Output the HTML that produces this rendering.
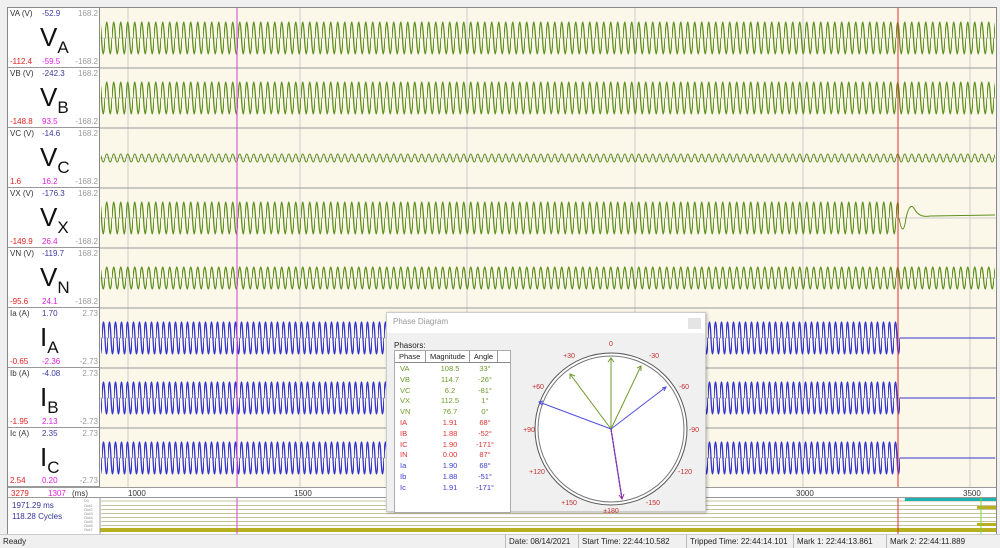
<!DOCTYPE html>
<html><head><meta charset="utf-8"><style>
*{margin:0;padding:0;box-sizing:border-box}
body{width:1000px;height:548px;background:#f0f0f0;position:relative;overflow:hidden;font-family:"Liberation Sans",sans-serif}
.a{position:absolute}
.lbl{position:absolute;left:8px;width:92px;background:#fff;border-bottom:1px solid #999;font-size:8px;color:#333}
.lbl .n{position:absolute;left:2px;top:1px}
.lbl .b{position:absolute;left:34px;top:1px;color:#3a3aa0}
.lbl .s{position:absolute;right:2px;top:1px;color:#999}
.lbl .s2{position:absolute;right:2px;bottom:1px;color:#999}
.lbl .r{position:absolute;left:2px;bottom:1px;color:#e02020}
.lbl .m{position:absolute;left:34px;bottom:1px;color:#e020e0}
.lbl .big{position:absolute;left:32px;top:14px;font-size:26px;color:#111}
.lbl .big sub{font-size:17px;vertical-align:-7px}
.st{position:absolute;top:535px;height:13px;font-size:8px;color:#222;border-left:1px solid #bbb;padding:2px 3px}
</style></head><body>
<div class="a" style="left:7px;top:7px;width:990px;height:527px;border:1px solid #888;background:#fff"></div>

<div class="lbl" style="top:8px;height:60px"><span class="n">VA (V)</span><span class="b">-52.9</span><span class="s">168.2</span><span class="big">V<sub>A</sub></span><span class="r">-112.4</span><span class="m">-59.5</span><span class="s2">-168.2</span></div>
<div class="lbl" style="top:68px;height:60px"><span class="n">VB (V)</span><span class="b">-242.3</span><span class="s">168.2</span><span class="big">V<sub>B</sub></span><span class="r">-148.8</span><span class="m">93.5</span><span class="s2">-168.2</span></div>
<div class="lbl" style="top:128px;height:60px"><span class="n">VC (V)</span><span class="b">-14.6</span><span class="s">168.2</span><span class="big">V<sub>C</sub></span><span class="r">1.6</span><span class="m">16.2</span><span class="s2">-168.2</span></div>
<div class="lbl" style="top:188px;height:60px"><span class="n">VX (V)</span><span class="b">-176.3</span><span class="s">168.2</span><span class="big">V<sub>X</sub></span><span class="r">-149.9</span><span class="m">26.4</span><span class="s2">-168.2</span></div>
<div class="lbl" style="top:248px;height:60px"><span class="n">VN (V)</span><span class="b">-119.7</span><span class="s">168.2</span><span class="big">V<sub>N</sub></span><span class="r">-95.6</span><span class="m">24.1</span><span class="s2">-168.2</span></div>
<div class="lbl" style="top:308px;height:60px"><span class="n">Ia (A)</span><span class="b">1.70</span><span class="s">2.73</span><span class="big">I<sub>A</sub></span><span class="r">-0.65</span><span class="m">-2.36</span><span class="s2">-2.73</span></div>
<div class="lbl" style="top:368px;height:60px"><span class="n">Ib (A)</span><span class="b">-4.08</span><span class="s">2.73</span><span class="big">I<sub>B</sub></span><span class="r">-1.95</span><span class="m">2.13</span><span class="s2">-2.73</span></div>
<div class="lbl" style="top:428px;height:59px"><span class="n">Ic (A)</span><span class="b">2.35</span><span class="s">2.73</span><span class="big">I<sub>C</sub></span><span class="r">2.54</span><span class="m">0.20</span><span class="s2">-2.73</span></div>

<svg class="a" style="left:99px;top:8px" width="897" height="480" viewBox="99 8 897 480">
<defs>
<pattern id="g1" patternUnits="userSpaceOnUse" width="7" height="60"><path d="M0,30 Q1.75,-2 3.5,30 T7,30" fill="none" stroke="#5f8f1e" stroke-width="1.3"/></pattern>
<pattern id="g2" patternUnits="userSpaceOnUse" width="7" height="60"><path d="M0,30 Q1.75,22 3.5,30 T7,30" fill="none" stroke="#5f8f1e" stroke-width="1.1"/></pattern>
<pattern id="g3" patternUnits="userSpaceOnUse" width="7" height="60"><path d="M0,30 Q1.75,8 3.5,30 T7,30" fill="none" stroke="#5f8f1e" stroke-width="1.3"/></pattern>
<pattern id="b1" patternUnits="userSpaceOnUse" width="6" height="60"><path d="M0,30 Q1.5,-2 3,30 T6,30" fill="none" stroke="#3535d0" stroke-width="1.3"/></pattern>
</defs>
<rect x="99" y="8" width="897" height="480" fill="#fbf8ea"/>
<g stroke="#ccc" stroke-width="1">
<line x1="128" y1="8" x2="128" y2="487"/><line x1="300" y1="8" x2="300" y2="487"/><line x1="467" y1="8" x2="467" y2="487"/><line x1="635" y1="8" x2="635" y2="487"/><line x1="803" y1="8" x2="803" y2="487"/><line x1="970" y1="8" x2="970" y2="487"/>
<line x1="99" y1="38" x2="996" y2="38"/><line x1="99" y1="98" x2="996" y2="98"/><line x1="99" y1="158" x2="996" y2="158"/><line x1="99" y1="218" x2="996" y2="218"/><line x1="99" y1="278" x2="996" y2="278"/><line x1="99" y1="338" x2="996" y2="338"/><line x1="99" y1="398" x2="996" y2="398"/><line x1="99" y1="458" x2="996" y2="458"/>
</g>
<g transform="translate(0,8)"><rect x="101" y="4" width="894" height="52" fill="url(#g1)"/></g>
<g transform="translate(0,68)"><rect x="101" y="3" width="894" height="54" fill="url(#g1)"/></g>
<g transform="translate(0,128)"><rect x="101" y="18" width="894" height="24" fill="url(#g2)"/></g>
<g transform="translate(0,188)"><rect x="101" y="3" width="798" height="54" fill="url(#g1)"/><path d="M899,30 Q903,52 906,30 Q910,12 915,22 Q920,30 930,28 L995,27" fill="none" stroke="#5f8f1e"/></g>
<g transform="translate(0,248)"><rect x="101" y="10" width="894" height="40" fill="url(#g3)"/></g>
<g transform="translate(0,308)"><rect x="101" y="3" width="799" height="54" fill="url(#b1)"/><line x1="900" y1="30" x2="995" y2="30" stroke="#3535d0"/></g>
<g transform="translate(0,368)"><rect x="101" y="3" width="799" height="54" fill="url(#b1)"/><line x1="900" y1="30" x2="995" y2="30" stroke="#3535d0"/></g>
<g transform="translate(0,428)"><rect x="101" y="3" width="799" height="54" fill="url(#b1)"/><line x1="900" y1="30" x2="995" y2="30" stroke="#3535d0"/></g>
<g stroke="#999"><line x1="99" y1="68" x2="996" y2="68"/><line x1="99" y1="128" x2="996" y2="128"/><line x1="99" y1="188" x2="996" y2="188"/><line x1="99" y1="248" x2="996" y2="248"/><line x1="99" y1="308" x2="996" y2="308"/><line x1="99" y1="368" x2="996" y2="368"/><line x1="99" y1="428" x2="996" y2="428"/></g>
<line x1="99.5" y1="8" x2="99.5" y2="487" stroke="#888"/>
<line x1="237" y1="8" x2="237" y2="487" stroke="#d040d0"/>
<line x1="898" y1="8" x2="898" y2="487" stroke="#e03030"/>
</svg>

<div class="a" style="left:8px;top:487px;width:988px;height:11px;background:#fff;border-top:1px solid #999;border-bottom:1px solid #999;font-size:8px">
<span class="a" style="left:3px;top:1px;color:#e02020">3279</span><span class="a" style="left:40px;top:1px;color:#e020e0">1307</span><span class="a" style="left:64px;top:1px;color:#333">(ms)</span>
<span class="a" style="left:120px;top:1px;color:#333">1000</span><span class="a" style="left:286px;top:1px;color:#333">1500</span><span class="a" style="left:788px;top:1px;color:#333">3000</span><span class="a" style="left:955px;top:1px;color:#333">3500</span></div>
<div class="a" style="left:8px;top:498px;width:988px;height:36px;background:#fff"></div>
<div class="a" style="left:12px;top:500px;font-size:8px;color:#33339a;line-height:11px">1971.29 ms<br>118.28 Cycles</div>
<svg class="a" style="left:80px;top:498px" width="916" height="36">
<g font-size="4" fill="#888" font-family="Liberation Sans"><text x="4" y="4">D1</text><text x="4" y="9">Out1</text><text x="4" y="13">Out2</text><text x="4" y="17">Out3</text><text x="4" y="21">Out4</text><text x="4" y="25">Out5</text><text x="4" y="29">Out6</text><text x="4" y="33">Out7</text></g>
<g stroke="#c8c498"><line x1="21" y1="3" x2="916" y2="3"/><line x1="21" y1="7.5" x2="916" y2="7.5"/><line x1="21" y1="11.5" x2="916" y2="11.5"/><line x1="21" y1="15.5" x2="916" y2="15.5"/><line x1="21" y1="19.5" x2="916" y2="19.5"/><line x1="21" y1="23.5" x2="916" y2="23.5"/><line x1="21" y1="27.5" x2="916" y2="27.5"/></g>
<rect x="20" y="30" width="896" height="4" fill="#b8b020"/>
<rect x="825" y="0" width="91" height="3" fill="#20b0b0"/>
<rect x="897" y="8" width="19" height="3" fill="#b8b020"/>
<rect x="897" y="25" width="19" height="3" fill="#b8b020"/>
<line x1="157" y1="0" x2="157" y2="36" stroke="#d040d0"/>
<line x1="818" y1="0" x2="818" y2="36" stroke="#e03030"/>
<line x1="901" y1="0" x2="901" y2="36" stroke="#80d040"/>
<line x1="20" y1="0" x2="20" y2="36" stroke="#999"/>
</svg>
<div class="a" style="left:0;top:534px;width:1000px;height:14px;background:#f0f0f0;border-top:1px solid #ccc"></div>
<div class="st" style="left:0;border:none">Ready</div>
<div class="st" style="left:505px">Date: 08/14/2021</div>
<div class="st" style="left:578px">Start Time: 22:44:10.582</div>
<div class="st" style="left:686px">Tripped Time: 22:44:14.101</div>
<div class="st" style="left:793px">Mark 1: 22:44:13.861</div>
<div class="st" style="left:886px">Mark 2: 22:44:11.889</div>

<div class="a" style="left:386px;top:312px;width:320px;height:200px;background:#f0f0f0;border:1px solid #ccc;box-shadow:1px 1px 3px rgba(0,0,0,.3)">
<div class="a" style="left:0;top:0;width:318px;height:20px;background:#fff;font-size:8px;color:#999;padding:4px 6px">Phase Diagram</div>
<div class="a" style="left:301px;top:5px;width:13px;height:11px;background:#e4e4e4"></div>
<div class="a" style="left:7px;top:28px;font-size:8px;color:#222">Phasors:</div>
<div class="a" style="left:7px;top:37px;width:117px;height:163px;background:#fff;border:1px solid #aaa;font-size:7.5px">
<div style="display:flex;border-bottom:1px solid #888;height:12px;line-height:11px;color:#222"><span style="width:31px;border-right:1px solid #999;padding-left:4px">Phase</span><span style="width:44px;border-right:1px solid #999;text-align:center">Magnitude</span><span style="width:28px;border-right:1px solid #999;text-align:center">Angle</span></div>
<div style="line-height:10.8px;padding-top:1px">
<div style="display:flex;color:#6e9a2c"><span style="width:35px;padding-left:5px">VA</span><span style="width:40px;text-align:center">108.5</span><span style="width:30px;text-align:center">33°</span></div>
<div style="display:flex;color:#6e9a2c"><span style="width:35px;padding-left:5px">VB</span><span style="width:40px;text-align:center">114.7</span><span style="width:30px;text-align:center">-26°</span></div>
<div style="display:flex;color:#6e9a2c"><span style="width:35px;padding-left:5px">VC</span><span style="width:40px;text-align:center">6.2</span><span style="width:30px;text-align:center">-81°</span></div>
<div style="display:flex;color:#6e9a2c"><span style="width:35px;padding-left:5px">VX</span><span style="width:40px;text-align:center">112.5</span><span style="width:30px;text-align:center">1°</span></div>
<div style="display:flex;color:#6e9a2c"><span style="width:35px;padding-left:5px">VN</span><span style="width:40px;text-align:center">76.7</span><span style="width:30px;text-align:center">0°</span></div>
<div style="display:flex;color:#e03030"><span style="width:35px;padding-left:5px">IA</span><span style="width:40px;text-align:center">1.91</span><span style="width:30px;text-align:center">68°</span></div>
<div style="display:flex;color:#e03030"><span style="width:35px;padding-left:5px">IB</span><span style="width:40px;text-align:center">1.88</span><span style="width:30px;text-align:center">-52°</span></div>
<div style="display:flex;color:#e03030"><span style="width:35px;padding-left:5px">IC</span><span style="width:40px;text-align:center">1.90</span><span style="width:30px;text-align:center">-171°</span></div>
<div style="display:flex;color:#e03030"><span style="width:35px;padding-left:5px">IN</span><span style="width:40px;text-align:center">0.00</span><span style="width:30px;text-align:center">87°</span></div>
<div style="display:flex;color:#3b3bd0"><span style="width:35px;padding-left:5px">Ia</span><span style="width:40px;text-align:center">1.90</span><span style="width:30px;text-align:center">68°</span></div>
<div style="display:flex;color:#3b3bd0"><span style="width:35px;padding-left:5px">Ib</span><span style="width:40px;text-align:center">1.88</span><span style="width:30px;text-align:center">-51°</span></div>
<div style="display:flex;color:#3b3bd0"><span style="width:35px;padding-left:5px">Ic</span><span style="width:40px;text-align:center">1.91</span><span style="width:30px;text-align:center">-171°</span></div>
</div></div>
<svg class="a" style="left:130px;top:20px" width="185" height="180" font-family="Liberation Sans" font-size="7">
<circle cx="94" cy="96" r="76" fill="#fff" stroke="#555" stroke-width="1"/>
<circle cx="94" cy="96" r="73" fill="none" stroke="#777" stroke-width="1"/>
<g fill="#c03030" text-anchor="middle">
<text x="94" y="13">0</text><text x="52" y="25">+30</text><text x="137" y="25">-30</text>
<text x="21" y="56">+60</text><text x="167" y="56">-60</text>
<text x="12" y="99">+90</text><text x="177" y="99">-90</text>
<text x="20" y="141">+120</text><text x="168" y="141">-120</text>
<text x="52" y="172">+150</text><text x="136" y="172">-150</text>
<text x="94" y="180">±180</text></g>
<g stroke="#6e9a2c" fill="none" stroke-width="1"><line x1="94" y1="96" x2="94" y2="25"/><line x1="94" y1="96" x2="53" y2="41"/><line x1="94" y1="96" x2="124" y2="33"/><line x1="94" y1="96" x2="94" y2="52"/>
<path d="M91,29 L94,25 L97,29 M53,46 L53,41 L58,43 M120,35 L124,33 L124,38"/></g>
<g stroke="#5050e0" fill="none" stroke-width="1"><line x1="94" y1="96" x2="22" y2="69"/><line x1="94" y1="96" x2="149" y2="54"/><line x1="94" y1="96" x2="105" y2="166"/><path d="M26,68 L22,69 L25,72 M145,55 L149,54 L147,58"/></g>
<line x1="94" y1="96" x2="105" y2="166" stroke="#9030a0" stroke-width="1.4" stroke-dasharray="3,1"/>
<path d="M102,162 L105,166 L107,161" fill="none" stroke="#9030a0"/>
</svg>
</div>
</body></html>
